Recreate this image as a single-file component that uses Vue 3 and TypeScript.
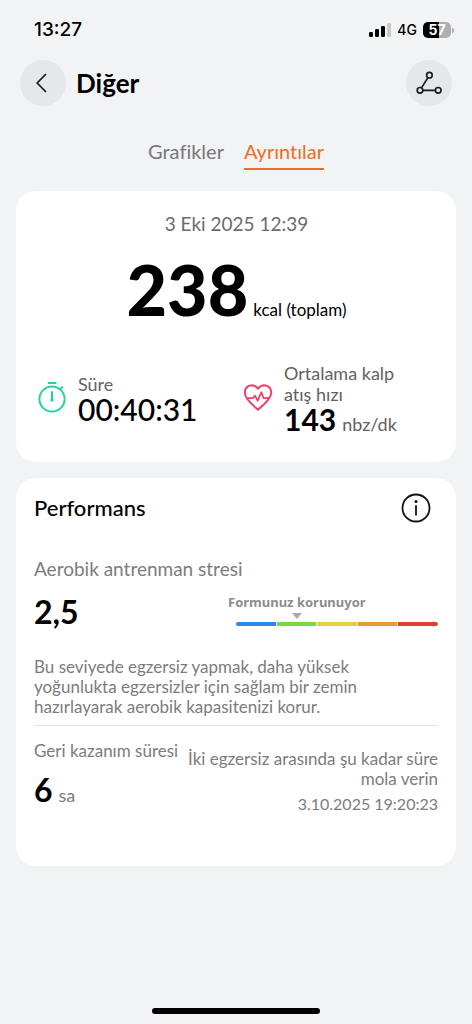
<script setup lang="ts">
interface Zone {
  name: string
  color: string
}

const level = 57
const stress = 2.5
const zones: Zone[] = [
  { name: 'blue', color: '#2b8ae8' },
  { name: 'green', color: '#78d745' },
  { name: 'yellow', color: '#e6cf3a' },
  { name: 'orange', color: '#e59a34' },
  { name: 'red', color: '#e43d2c' },
]
const markerLeft = `${((stress - 1) / zones.length) * 100}%`
const stressText = stress.toFixed(1).replace('.', ',')
</script>

<template>
  <div class="page">
    <div class="status">
      <span class="clock">13:27</span>
      <div class="status-right">
        <svg class="signal" viewBox="0 0 22 14" aria-hidden="true">
          <rect x="0" y="9" width="4" height="5" rx="1.3" />
          <rect x="6" y="6" width="4" height="8" rx="1.3" />
          <rect x="12" y="3" width="4" height="11" rx="1.3" />
          <rect x="18" y="0" width="4" height="14" rx="1.3" fill="#c8c9cb" />
        </svg>
        <span class="network">4G</span>
        <span class="battery"><span class="cell">{{ level }}</span><span class="tip"></span></span>
      </div>
    </div>

    <header class="header">
      <button class="round" type="button" aria-label="Geri">
        <svg viewBox="0 0 46 46" fill="none" stroke="#1a1a1a" stroke-width="1.7">
          <path d="M26 14 17.2 23 26 32" />
        </svg>
      </button>
      <h1>Diğer</h1>
      <button class="round" type="button" aria-label="Rota">
        <svg viewBox="0 0 46 46" fill="none" stroke="#1a1a1a" stroke-width="1.7">
          <circle cx="23.4" cy="15.2" r="2.8" />
          <circle cx="14" cy="30.3" r="2.8" />
          <circle cx="32.2" cy="30.3" r="2.8" />
          <path d="M21.9 17.6 15.5 27.9M16.8 30.3H29.4" />
        </svg>
      </button>
    </header>

    <nav class="tabs">
      <a href="#grafikler">Grafikler</a>
      <a href="#ayrintilar" class="active" aria-current="page">Ayrıntılar</a>
    </nav>

    <main>
      <section class="card summary">
        <p class="date">3 Eki 2025 12:39</p>
        <p class="energy"><strong>238</strong><span>kcal (toplam)</span></p>
        <div class="stats">
          <div class="stat">
            <svg class="stat-icon" viewBox="0 0 30 34" fill="none" stroke="#26d29a" stroke-width="2">
              <circle cx="15" cy="18" r="12.6" />
              <path d="M10.8 2.1h8.6M23.4 7.8l2.4-2.2M15 10.2v8" />
              <circle cx="15" cy="19" r="1" fill="#26d29a" stroke-width="1.4" />
            </svg>
            <div>
              <p class="label">Süre</p>
              <p class="value">00:40:31</p>
            </div>
          </div>
          <div class="stat">
            <svg class="stat-icon" viewBox="0 0 30 34" fill="none" stroke="#ee3f68" stroke-width="2" stroke-linejoin="round">
              <path d="M15 28.6C10 24.6 1.8 18 1.8 11.8A7 7 0 0 1 8.6 4.2C11.6 4.2 13.6 5.8 15 7.8C16.4 5.8 18.4 4.2 21.4 4.2A7 7 0 0 1 28.2 11.8C28.2 18 20 24.6 15 28.6Z" />
              <path d="M3.4 17.2h6.4l2.2-2.6 2.6 5.2 3.8-8.6 2.2 6h6" stroke-width="1.7" />
            </svg>
            <div>
              <p class="label">Ortalama kalp atış hızı</p>
              <p class="value"><b>143</b><span class="unit">nbz/dk</span></p>
            </div>
          </div>
        </div>
      </section>

      <section class="card performance">
        <div class="title-row">
          <h2>Performans</h2>
          <button class="info" type="button" aria-label="Bilgi">
            <svg viewBox="0 0 30 30" fill="none" stroke="#111" stroke-width="1.8">
              <circle cx="15" cy="15" r="13.5" />
              <path d="M15 12.2v10.2" />
              <circle cx="15" cy="8.6" r="1.5" fill="#111" stroke="none" />
            </svg>
          </button>
        </div>
        <p class="subtitle">Aerobik antrenman stresi</p>
        <div class="stress">
          <strong class="big">{{ stressText }}</strong>
          <div class="gauge">
            <p class="gauge-label">Formunuz korunuyor</p>
            <div class="bar">
              <span class="marker" :style="{ left: markerLeft }"></span>
              <span v-for="z in zones" :key="z.name" class="zone" :style="{ background: z.color }"></span>
            </div>
          </div>
        </div>
        <p class="advice">Bu seviyede egzersiz yapmak, daha yüksek yoğunlukta egzersizler için sağlam bir zemin hazırlayarak aerobik kapasitenizi korur.</p>
        <div class="recovery">
          <div class="left">
            <p>Geri kazanım süresi</p>
            <p class="hours"><strong class="big">6</strong><span>sa</span></p>
          </div>
          <div class="right">
            <p class="rest">İki egzersiz arasında şu kadar süre mola verin</p>
            <p class="until">3.10.2025 19:20:23</p>
          </div>
        </div>
      </section>
    </main>
    <div class="home"></div>
  </div>
</template>

<style>
body {
  margin: 0;
  background: #f2f3f5;
}
</style>

<style scoped>
.page {
  min-height: 100vh;
  box-sizing: border-box;
  display: flex;
  flex-direction: column;
  padding: 0 16px 10px;
  background: #f2f3f5;
  color: #000;
  font-family: Lato, "Noto Sans", sans-serif;
  font-variant-ligatures: none;
}
p, h1, h2 {
  margin: 0;
}
button {
  border: 0;
  padding: 0;
  background: none;
  cursor: pointer;
}
svg {
  display: block;
}
.status {
  display: flex;
  align-items: center;
  justify-content: space-between;
  height: 60px;
  padding: 0 2px 0 18px;
}
.clock {
  font: 500 19px/24px Inter, sans-serif;
}
.status-right {
  display: flex;
  align-items: center;
}
.signal {
  width: 22px;
  height: 14px;
}
.network {
  margin: 0 6px;
  font: 500 14px/18px Inter, sans-serif;
}
.battery {
  display: flex;
  align-items: center;
  gap: 1px;
}
.cell {
  width: 28px;
  border-radius: 5px;
  background: linear-gradient(90deg, #000 57%, #aeafb1 57%);
  color: #fff;
  font: 700 14px/16px Inter, sans-serif;
  text-align: center;
}
.tip {
  width: 2px;
  height: 5px;
  border-radius: 0 2px 2px 0;
  background: #aeafb1;
}
.header {
  display: flex;
  align-items: center;
  padding: 0 4px;
}
.round {
  width: 46px;
  height: 46px;
  border-radius: 50%;
  background: #e6e7e9;
}
h1 {
  flex: 1;
  margin-left: 10px;
  font-size: 26px;
  line-height: 32px;
  font-weight: 700;
}
.tabs {
  display: flex;
  justify-content: center;
  gap: 20px;
  margin-top: 32px;
  font-size: 20px;
  line-height: 26px;
}
.tabs a {
  padding-bottom: 4px;
  border-bottom: 2px solid transparent;
  color: #77787a;
  text-decoration: none;
}
.tabs .active {
  color: #ee6c26;
  border-color: #ee6c26;
}
main {
  display: flex;
  flex-direction: column;
  gap: 16px;
  margin-top: 21px;
}
.card {
  border-radius: 20px;
  background: #fff;
}
.summary {
  padding: 20px 20px 29px 21px;
}
.date {
  text-align: center;
  font-size: 19px;
  line-height: 26px;
  color: #6b6b6b;
}
.energy {
  display: flex;
  justify-content: center;
  align-items: baseline;
  gap: 5px;
  margin-top: 12px;
  font-size: 17px;
  line-height: 24px;
}
.energy strong {
  font-size: 70px;
  line-height: 80px;
  font-weight: 900;
}
.stats {
  display: grid;
  grid-template-columns: 206px 1fr;
  align-items: center;
  margin-top: 34px;
}
.stat {
  display: flex;
  align-items: center;
  gap: 11px;
}
.stat:last-child {
  padding-right: 36px;
}
.stat-icon {
  flex: none;
  width: 30px;
  height: 34px;
}
.label {
  font-size: 18px;
  line-height: 21px;
  color: #626262;
}
.value {
  font-size: 30px;
  line-height: 28px;
  font-weight: 500;
  white-space: nowrap;
}
.unit {
  margin-left: 6px;
  font-size: 18px;
  line-height: 18px;
  font-weight: 400;
  color: #626262;
}
.performance {
  padding: 15px 18px 52px;
  color: #7c7c7c;
}
.title-row {
  display: flex;
  align-items: center;
  justify-content: space-between;
  padding-right: 7px;
  color: #000;
}
h2 {
  font-size: 22px;
  line-height: 28px;
  font-weight: 500;
}
.info {
  width: 30px;
  height: 30px;
}
.subtitle {
  margin-top: 33px;
  font-size: 19px;
  line-height: 26px;
}
.stress {
  display: flex;
  justify-content: space-between;
  margin-top: 10px;
}
.big {
  color: #000;
  font-size: 32px;
  line-height: 40px;
  font-weight: 700;
}
.gauge {
  width: 50%;
}
.gauge-label {
  margin-left: -8px;
  font: 700 13px/20px "Noto Sans", sans-serif;
  white-space: nowrap;
  color: #8c8c8c;
}
.bar {
  position: relative;
  display: flex;
  gap: 1px;
  margin-top: 10px;
}
.zone {
  flex: 1;
  height: 4px;
}
.marker + .zone {
  border-radius: 2px 0 0 2px;
}
.zone:last-child {
  border-radius: 0 2px 2px 0;
}
.marker {
  position: absolute;
  bottom: 7px;
  width: 0;
  border: 5px solid transparent;
  border-top: 6px solid #aaa;
  border-bottom: 0;
  transform: translateX(-50%);
}
.advice {
  margin-top: 25px;
  padding: 0 60px 8px 0;
  font-size: 17px;
  line-height: 20px;
}
.recovery {
  display: flex;
  justify-content: space-between;
  gap: 8px;
  padding-top: 15px;
  border-top: 1px solid #e4e4e4;
  font-size: 17px;
  line-height: 20px;
}
.left {
  flex: none;
}
.hours {
  display: flex;
  align-items: baseline;
  gap: 6px;
  margin-top: 9px;
  font-size: 18px;
}
.right {
  padding-top: 8px;
  text-align: right;
}
.until {
  margin-top: 5px;
  font-size: 16px;
}
.home {
  align-self: center;
  width: 168px;
  height: 6px;
  margin-top: auto;
  border-radius: 3px;
  background: #000;
}
</style>
